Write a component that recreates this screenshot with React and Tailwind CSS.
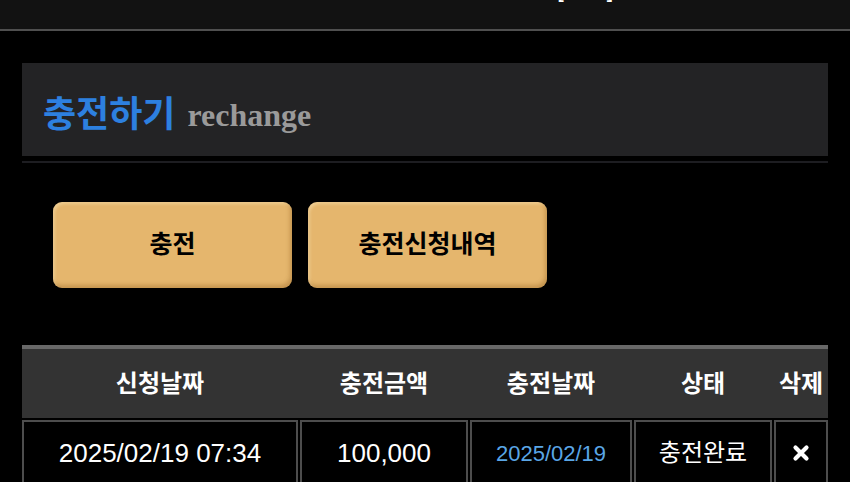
import React from 'react';

const KR = { fontFamily: '"Liberation Sans", "Noto Sans CJK KR", sans-serif' };

const columns = [
  { key: 'reqDate', label: '신청날짜' },
  { key: 'amount', label: '충전금액' },
  { key: 'doneDate', label: '충전날짜' },
  { key: 'status', label: '상태' },
  { key: 'del', label: '삭제' },
];

const rows = [
  { reqDate: '2025/02/19 07:34', amount: '100,000', doneDate: '2025/02/19', status: '충전완료' },
];

// thick rounded x mark used in the delete column
const XMark = () => (
  <svg width="18" height="18" viewBox="0 0 18 18">
    <path d="M3.5 3.5 L14.5 14.5 M14.5 3.5 L3.5 14.5" stroke="#fff" strokeWidth="4.2" strokeLinecap="round" />
  </svg>
);

const App = () => {
  return (
    <div className="w-[850px] h-[482px] overflow-hidden bg-black" style={KR}>
      {/* top bar (mostly scrolled out of view) */}
      <div className="h-[31px] bg-[#121212] border-b-2 border-[#4f4f4f] overflow-hidden">
        <div className="pl-[503px] -mt-[19px] text-[18px] leading-[22px] font-bold text-white whitespace-nowrap">
          홍길동 [ <span className="text-[#8a8a8a]">일반</span> ]
        </div>
      </div>

      <div className="px-[22px] pt-[32px]">
        {/* page title */}
        <div className="h-[93px] bg-[#232325] flex items-center gap-[12px] pl-[21px] pt-[11px]">
          <span className="text-[36px] font-bold text-[#2d80e0] leading-none">충전하기</span>
          <span
            className="text-[32px] font-bold text-[#9a9a9a] leading-none"
            style={{ fontFamily: '"Liberation Serif", serif' }}
          >
            rechange
          </span>
        </div>
        <div className="mt-[5px] h-[2px] bg-[#1d1d21]" />

        {/* action buttons */}
        <div className="flex gap-[16px] pl-[31px] mt-[39px]">
          {['충전', '충전신청내역'].map((label) => (
            <button
              key={label}
              className="w-[239px] h-[86px] rounded-[9px] bg-[#e5b66d] text-black text-[25px] font-bold flex items-center justify-center shadow-[inset_-2px_-3px_4px_rgba(120,70,10,0.3),inset_2px_2px_3px_rgba(255,240,200,0.4)]"
            >
              {label}
            </button>
          ))}
        </div>

        {/* history table */}
        <div className="mt-[57px]">
          <div className="h-[73px] bg-[#333333] border-t-4 border-[#686868] grid grid-cols-[276px_168px_162px_138px_54px] gap-x-[2px]">
            {columns.map((col) => (
              <div key={col.key} className="flex items-center justify-center text-white text-[24px] font-bold">
                {col.label}
              </div>
            ))}
          </div>
          {rows.map((row, i) => (
            <div key={i} className="mt-[2px] grid grid-cols-[276px_168px_162px_138px_54px] gap-x-[2px]">
              <div className="h-[66px] border-2 border-[#4d4d4d] flex items-center justify-center text-white text-[26px]">
                {row.reqDate}
              </div>
              <div className="h-[66px] border-2 border-[#4d4d4d] flex items-center justify-center text-white text-[26px]">
                {row.amount}
              </div>
              <div className="h-[66px] border-2 border-[#4d4d4d] flex items-center justify-center text-[#5aa6e6] text-[22px]">
                {row.doneDate}
              </div>
              <div className="h-[66px] border-2 border-[#4d4d4d] flex items-center justify-center text-white text-[24px]">
                {row.status}
              </div>
              <div className="h-[66px] border-2 border-[#4d4d4d] flex items-center justify-center">
                <XMark />
              </div>
            </div>
          ))}
        </div>
      </div>
    </div>
  );
};

export default App;
